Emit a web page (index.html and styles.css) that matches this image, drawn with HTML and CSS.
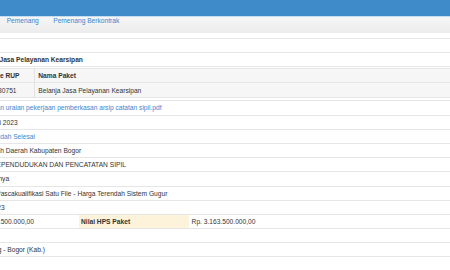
FILE: index.html
```html
<!DOCTYPE html>
<html lang="id">
<head>
<meta charset="utf-8">
<title>Informasi Tender</title>
<link rel="stylesheet" href="styles.css">
</head>
<body>
<div class="topbar"></div>
<nav class="tabs">
  <a href="#" class="tab">Pemenang</a>
  <a href="#" class="tab">Pemenang Berkontrak</a>
</nav>
<div class="detail">
  <div class="row"><div class="label">Kode Tender</div><div class="value">8245122</div></div>
  <div class="row"><div class="label">Nama Tender</div><div class="value title">Belanja Jasa Pelayanan Kearsipan</div></div>
  <div class="row"><div class="label">Rencana Umum Pengadaan</div>
    <div class="value nested">
      <table class="rup">
        <thead><tr><th class="c1">Kode RUP</th><th class="c2">Nama Paket</th></tr></thead>
        <tbody><tr><td class="c1">32630751</td><td class="c2">Belanja Jasa Pelayanan Kearsipan</td></tr></tbody>
      </table>
    </div>
  </div>
  <div class="row"><div class="label">Uraian Singkat Pekerjaan</div><div class="value"><a href="#" class="link">Rancangan uraian pekerjaan pemberkasan arsip catatan sipil.pdf</a></div></div>
  <div class="row"><div class="label">Tanggal Pembuatan</div><div class="value">12 Januari 2023</div></div>
  <div class="row"><div class="label">Tahap Tender Saat Ini</div><div class="value"><a href="#" class="link">Tender Sudah Selesai</a></div></div>
  <div class="row"><div class="label">Instansi</div><div class="value">Pemerintah Daerah Kabupaten Bogor</div></div>
  <div class="row"><div class="label">Satuan Kerja</div><div class="value">DINAS KEPENDUDUKAN DAN PENCATATAN SIPIL</div></div>
  <div class="row"><div class="label">Jenis Pengadaan</div><div class="value">Jasa Lainnya</div></div>
  <div class="row"><div class="label">Metode Pengadaan</div><div class="value">Tender - Pascakualifikasi Satu File - Harga Terendah Sistem Gugur</div></div>
  <div class="row"><div class="label">Tahun Anggaran</div><div class="value">APBD 2023</div></div>
  <div class="row"><div class="label">Nilai Pagu Paket</div>
    <div class="value split">
      <div class="part first">Rp. 3.163.500.000,00</div>
      <div class="part sublabel">Nilai HPS Paket</div>
      <div class="part">Rp. 3.163.500.000,00</div>
    </div>
  </div>
  <div class="row"><div class="label">Jenis Kontrak</div><div class="value">-</div></div>
  <div class="row last"><div class="label">Lokasi Pekerjaan</div><div class="value">Leuwiliang - Bogor (Kab.)</div></div>
</div>
</body>
</html>
```

FILE: styles.css
```css
html, body {
  margin: 0;
  padding: 0;
  background: #ffffff;
}
body {
  width: 450px;
  height: 270px;
  overflow: hidden;
  font-family: "Liberation Sans", Arial, sans-serif;
  font-size: 6.65px;
  color: #333333;
}
.topbar {
  height: 16px;
  background: #3f8ac8;
  border-bottom: 1px solid #c3dcf0;
}
.tabs {
  display: flex;
  height: 16px;
  line-height: 8px;
  padding-left: 6.7px;
  gap: 14.4px;
  background: linear-gradient(#f6f6f6, #ececec);
  box-sizing: border-box;
}
.tab {
  color: #3a86cf;
  text-decoration: none;
}
.detail {
  margin-top: 5px;
  margin-left: -153px;
}
.row {
  display: grid;
  grid-template-columns: 120px 1fr;
  border-top: 1px solid #e6e6e6;
  line-height: 13.18px;
}
.row.last {
  border-bottom: 1px solid #e6e6e6;
}
.label {
  font-weight: bold;
  padding: 0 3px;
  white-space: nowrap;
  overflow: hidden;
}
.value {
  padding: 0 3px;
  white-space: nowrap;
}
.value.title {
  font-weight: bold;
  padding-left: 7px;
}
.link {
  color: #3a86cf;
  text-decoration: none;
}
.value.nested {
  padding: 1px 0 2px 0;
}
.rup {
  width: 100%;
  border-collapse: collapse;
  border-top: 1px solid #e6e6e6;
  border-bottom: 1px solid #e6e6e6;
  background: #f6f6f6;
}
.rup th, .rup td {
  text-align: left;
  padding: 0;
  height: 14px;
  line-height: 13px;
  white-space: nowrap;
}
.rup th {
  font-weight: bold;
  height: 13px;
  border-bottom: 1px solid #e6e6e6;
}
.rup .c1 {
  width: 47.3px;
  padding-left: 20px;
  border-right: 1px solid #e2e2e2;
}
.rup .c2 {
  padding-left: 3px;
}
.value.split {
  display: flex;
  padding: 0;
}
.part {
  padding: 0 3px;
}
.part.first {
  width: 106px;
}
.part.sublabel {
  width: 103.6px;
  font-weight: bold;
  background: #fcf3da;
  padding-left: 2px;
  padding-right: 4px;
}
```
